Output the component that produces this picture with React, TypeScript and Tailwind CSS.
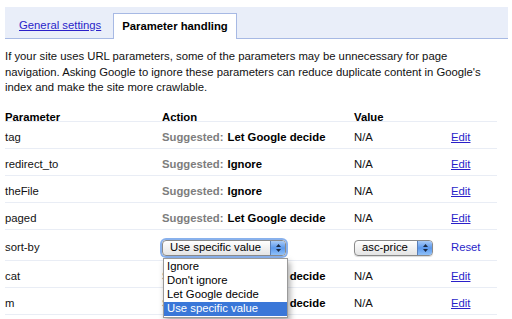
import React from 'react';

type Row = {
  name: string;
  suggested?: string;
  value?: string;
};

const rows: Row[] = [
  { name: 'tag', suggested: 'Let Google decide', value: 'N/A' },
  { name: 'redirect_to', suggested: 'Ignore', value: 'N/A' },
  { name: 'theFile', suggested: 'Ignore', value: 'N/A' },
  { name: 'paged', suggested: 'Let Google decide', value: 'N/A' },
];

const lowerRows: Row[] = [
  { name: 'cat', suggested: 'Let Google decide', value: 'N/A' },
  { name: 'm', suggested: 'Let Google decide', value: 'N/A' },
];

const options = ['Ignore', "Don't ignore", 'Let Google decide', 'Use specific value'];

const font = { fontFamily: '"Liberation Sans", Arial, sans-serif' };

const Arrows: React.FC = () => (
  <svg width="7" height="10" viewBox="0 0 7 10" className="block">
    <path d="M3.5 1 L6 4 L1 4 Z" fill="#1b2a44" />
    <path d="M3.5 9 L6 6 L1 6 Z" fill="#1b2a44" />
  </svg>
);

const MacSelect: React.FC<{ label: string; width: string; focused?: boolean }> = ({
  label,
  width,
  focused,
}) => (
  <div
    className={`flex h-[16px] ${width} items-stretch overflow-hidden rounded-[4px] border border-[#8a8a8a] bg-gradient-to-b from-white to-[#e4e4e4] ${
      focused ? 'shadow-[0_0_0_2px_rgba(98,151,230,0.75)]' : 'shadow-[0_1px_1px_rgba(0,0,0,0.15)]'
    }`}
  >
    <div className="flex flex-1 items-center pl-[7px] text-[11.3px] leading-none text-black">{label}</div>
    <div className="flex w-[15px] items-center justify-center border-l border-[#5a7fb8] bg-gradient-to-b from-[#a9cbf7] via-[#5b98ec] to-[#8fc0f8]">
      <Arrows />
    </div>
  </div>
);

const Cell: React.FC<{ children?: React.ReactNode; className?: string }> = ({ children, className }) => (
  <div className={`flex items-center ${className ?? ''}`}>{children}</div>
);

const TableRow: React.FC<{ row: Row }> = ({ row }) => (
  <div className="grid h-[27px] grid-cols-[157px_192px_97px_46px] border-b border-[#e9edf5] pt-[6px]">
    <Cell>{row.name}</Cell>
    <Cell>
      <span className="font-bold text-[#7d7d7d]">Suggested:</span>
      <span className="ml-[4px] font-bold text-black">{row.suggested}</span>
    </Cell>
    <Cell>{row.value}</Cell>
    <Cell>
      <a className="text-[#2a1fc9] underline">Edit</a>
    </Cell>
  </div>
);

export default function App() {
  return (
    <div className="h-[319px] w-[512px] overflow-hidden bg-white pl-[5px] pr-[4px] text-[11.3px] text-[#111]" style={font}>
      {/* tabs */}
      <div className="mt-[7px] flex h-[32px] items-end border-b border-[#a7b9e4] bg-[#e9eef9] pl-[8px]">
        <div className="flex h-[25px] w-[100px] items-center pl-[6px]">
          <a className="text-[#2a1fc9] underline">General settings</a>
        </div>
        <div className="-mb-px flex h-[26px] w-[124px] items-center justify-center border border-b-0 border-[#a7b9e4] bg-white font-bold text-black">
          Parameter handling
        </div>
      </div>

      <p className="mt-[10px] w-[490px] leading-[15.5px] text-[#111]">
        If your site uses URL parameters, some of the parameters may be unnecessary for page navigation. Asking
        Google to ignore these parameters can reduce duplicate content in Google's index and make the site more
        crawlable.
      </p>

      <div className="w-[492px]">
        <div className="grid h-[26px] grid-cols-[157px_192px_97px_46px] border-b border-[#e9edf5] pt-[13px] font-bold text-black">
          <Cell>Parameter</Cell>
          <Cell>Action</Cell>
          <Cell>Value</Cell>
          <Cell />
        </div>
        {rows.map((r) => (
          <TableRow key={r.name} row={r} />
        ))}
        <div className="grid h-[31px] grid-cols-[157px_192px_97px_46px] border-b border-[#e9edf5] pt-[6px]">
          <Cell>sort-by</Cell>
          <Cell className="relative">
            <MacSelect label="Use specific value" width="w-[124px]" focused />
            <div className="absolute left-px top-[22px] z-10 w-[125px] border border-[#9a9a9a] bg-white py-[1px] shadow-[2px_4px_6px_rgba(0,0,0,0.35)]">
              {options.map((o, i) => (
                <div
                  key={o}
                  className={`flex h-[14px] items-center pl-[3px] leading-none ${
                    i === options.length - 1 ? 'bg-[#3a77d8] text-white' : 'text-black'
                  }`}
                >
                  {o}
                </div>
              ))}
            </div>
          </Cell>
          <Cell>
            <MacSelect label="asc-price" width="w-[79px]" />
          </Cell>
          <Cell>
            <a className="text-[#2a1fc9]">Reset</a>
          </Cell>
        </div>
        {lowerRows.map((r) => (
          <TableRow key={r.name} row={r} />
        ))}
      </div>
    </div>
  );
}
